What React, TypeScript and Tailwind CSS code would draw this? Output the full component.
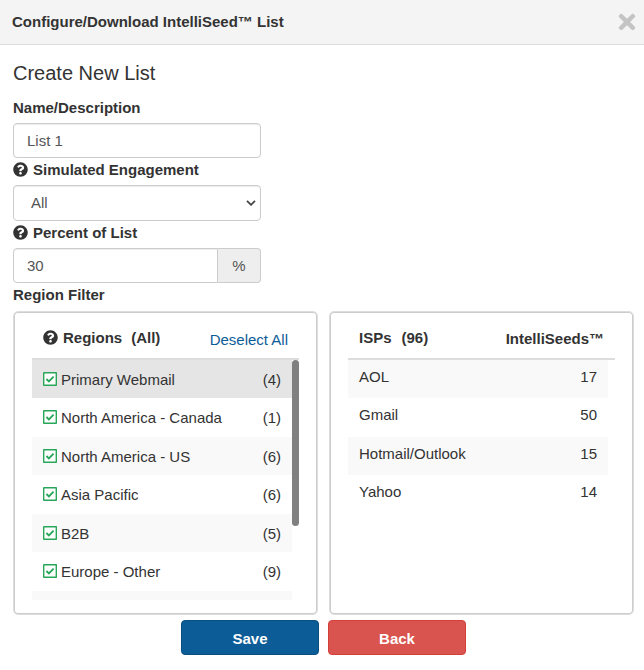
import React, { useState } from "react";
import { FaQuestionCircle, FaTimes } from "react-icons/fa";

const regions = [
  { name: "Primary Webmail", count: 4 },
  { name: "North America - Canada", count: 1 },
  { name: "North America - US", count: 6 },
  { name: "Asia Pacific", count: 6 },
  { name: "B2B", count: 5 },
  { name: "Europe - Other", count: 9 },
];

const isps = [
  { name: "AOL", seeds: 17 },
  { name: "Gmail", seeds: 50 },
  { name: "Hotmail/Outlook", seeds: 15 },
  { name: "Yahoo", seeds: 14 },
];

const fieldClass =
  "w-full border border-[#ccc] bg-white px-[13px] text-[15px] text-[#555] outline-none shadow-[inset_0_1px_1px_rgba(0,0,0,0.075)]";
const labelClass = "flex h-[27px] items-center gap-[5px] pb-[4px] font-bold";
const panelClass =
  "h-[304px] rounded-[5px] border border-[#ddd] px-[18px] shadow-[inset_0_0_0_1px_#ccc]";
const buttonClass = "h-[35px] w-[138px] rounded-[4px] border pt-[2px] font-bold text-white";

function RegionRow({ name, count, active }: { name: string; count: number; active: boolean }) {
  const [checked, setChecked] = useState(true);
  return (
    <tr
      className={
        active ? "h-[38px] bg-[#e5e5e5]" : "odd:h-[38px] odd:bg-[#f9f9f9] even:h-[39px]"
      }
    >
      <td className="pl-[11px] pt-px">
        <label className="flex items-center gap-[5px]">
          <span className="relative block h-[16px] w-[13px]">
            <input
              type="checkbox"
              checked={checked}
              onChange={() => setChecked(!checked)}
              className="block h-[14px] w-[14px] appearance-none rounded-[1px] border border-[#28a65a] bg-white"
            />
            {checked && (
              <svg
                viewBox="0 0 14 14"
                className="pointer-events-none absolute left-0 top-0 h-[14px] w-[14px]"
                fill="none"
                stroke="#28a65a"
                strokeWidth="1.8"
              >
                <path d="M3.4 7 5.9 9.4 10.6 4.6" />
                <rect x="0.7" y="0.7" width="12.6" height="12.6" rx="0.6" strokeWidth="1.4" />
              </svg>
            )}
          </span>
          {name}
        </label>
      </td>
      <td className="pr-[11px] pt-px text-right">({count})</td>
    </tr>
  );
}

export default function App() {
  return (
    <div className="bg-white font-['Liberation_Sans',Arial,sans-serif] text-[15px] leading-[22px] text-[#333]">
      <header className="flex h-[45px] items-center justify-between border-b border-[#ddd] bg-[#f4f4f4] pl-[12px] pr-[5px]">
        <h1 className="font-bold">Configure/Download IntelliSeed™ List</h1>
        <button type="button" aria-label="Close" className="text-[#c4c4c4]">
          <FaTimes size={24} />
        </button>
      </header>

      <main className="pb-[15px] pl-[13px] pr-[10px] pt-[16px]">
        <h2 className="mb-[11px] text-[20px] leading-[24px]">Create New List</h2>

        <form onSubmit={(e) => e.preventDefault()}>
          <div className="max-w-[248px]">
            <label htmlFor="name" className={labelClass}>
              Name/Description
            </label>
            <input
              id="name"
              type="text"
              defaultValue="List 1"
              className={`${fieldClass} block h-[35px] rounded-[4px]`}
            />

            <label htmlFor="engagement" className={labelClass}>
              <FaQuestionCircle size={15} />
              Simulated Engagement
            </label>
            <div className="relative">
              <select
                id="engagement"
                defaultValue="All"
                className={`${fieldClass} block h-[36px] appearance-none rounded-[4px] pl-[17px]`}
              >
                <option>All</option>
                <option>Openers</option>
              </select>
              <svg
                viewBox="0 0 10 6"
                className="pointer-events-none absolute right-[5px] top-[15px] h-[6px] w-[10px]"
                fill="none"
                stroke="#444"
                strokeWidth="1.8"
              >
                <path d="M1 .8 5 4.8 9 .8" />
              </svg>
            </div>

            <label htmlFor="percent" className={labelClass}>
              <FaQuestionCircle size={15} />
              Percent of List
            </label>
            <div className="flex h-[35px]">
              <input
                id="percent"
                type="text"
                defaultValue="30"
                className={`${fieldClass} min-w-0 flex-1 rounded-l-[4px]`}
              />
              <span className="flex w-[43px] items-center justify-center rounded-r-[4px] border border-l-0 border-[#ccc] bg-[#eee] text-[#555]">
                %
              </span>
            </div>
          </div>

          <h3 className="mb-[5px] pt-px font-bold">Region Filter</h3>

          <div className="grid grid-cols-2 gap-[11px]">
            <section className={panelClass}>
              <div className="flex h-[48px] items-center justify-between border-b-2 border-[#ddd] px-[11px]">
                <h4 className="flex items-center gap-[5px] pt-[5px] font-bold">
                  <FaQuestionCircle size={15} />
                  Regions
                  <span className="pl-[4px]">(All)</span>
                </h4>
                <button type="button" className="pt-[9px] text-[#0b5c97]">
                  Deselect All
                </button>
              </div>
              <div className="flex h-[240px] items-start overflow-hidden">
                <table className="flex-1 border-collapse">
                  <tbody>
                    {regions.map((region, i) => (
                      <RegionRow key={region.name} {...region} active={i === 0} />
                    ))}
                    <tr className="h-[9px] bg-[#f9f9f9]">
                      <td colSpan={2} />
                    </tr>
                  </tbody>
                </table>
                <div className="h-[166px] w-[7px] rounded-[4px] bg-[#808080]" />
              </div>
            </section>

            <section className={panelClass}>
              <table className="w-full border-separate border-spacing-0">
                <thead>
                  <tr className="h-[48px]">
                    <th className="border-b-2 border-[#ddd] pl-[11px] pt-[5px] text-left font-bold">
                      ISPs<span className="pl-[10px]">(96)</span>
                    </th>
                    <th
                      colSpan={2}
                      className="border-b-2 border-[#ddd] pr-[11px] pt-[7px] text-right font-bold"
                    >
                      IntelliSeeds™
                    </th>
                  </tr>
                </thead>
                <tbody>
                  {isps.map((isp) => (
                    <tr key={isp.name} className="group align-top odd:h-[38px] even:h-[39px]">
                      <td className="pl-[11px] pt-[6px] group-odd:bg-[#f9f9f9]">{isp.name}</td>
                      <td className="pr-[11px] pt-[6px] text-right group-odd:bg-[#f9f9f9]">
                        {isp.seeds}
                      </td>
                      <td className="w-[7px]" />
                    </tr>
                  ))}
                </tbody>
              </table>
            </section>
          </div>

          <div className="mt-[5px] flex justify-center gap-[9px]">
            <button type="submit" className={`${buttonClass} border-[#0a4f82] bg-[#0b5c97]`}>
              Save
            </button>
            <button type="button" className={`${buttonClass} border-[#d43f3a] bg-[#d9534f]`}>
              Back
            </button>
          </div>
        </form>
      </main>
    </div>
  );
}
